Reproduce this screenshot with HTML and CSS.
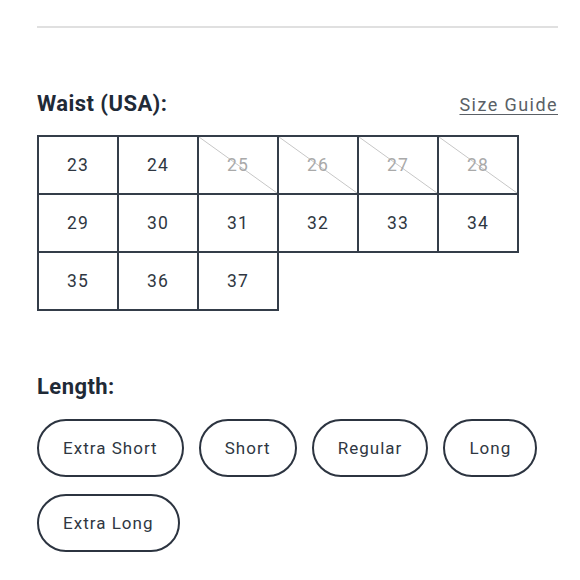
FILE: index.html
```html
<!DOCTYPE html>
<html>
<head>
<meta charset="utf-8">
<link rel="stylesheet" href="styles.css">
</head>
<body>
<div class="page">
  <div class="rule"></div>
  <div class="section-head">
    <h2 class="title">Waist (USA):</h2>
    <a class="guide" href="#">Size Guide</a>
  </div>
  <div class="sizes">
    <div class="cell">23</div>
    <div class="cell">24</div>
    <div class="cell off">25</div>
    <div class="cell off">26</div>
    <div class="cell off">27</div>
    <div class="cell off">28</div>
    <div class="cell">29</div>
    <div class="cell">30</div>
    <div class="cell">31</div>
    <div class="cell">32</div>
    <div class="cell">33</div>
    <div class="cell">34</div>
    <div class="cell">35</div>
    <div class="cell">36</div>
    <div class="cell">37</div>
  </div>
  <h2 class="title length-title">Length:</h2>
  <div class="pills">
    <div class="pill">Extra Short</div>
    <div class="pill">Short</div>
    <div class="pill">Regular</div>
    <div class="pill">Long</div>
    <div class="pill">Extra Long</div>
  </div>
</div>
</body>
</html>
```
FILE: styles.css
```css
html, body {
  margin: 0;
  padding: 0;
  background: #fff;
}
.page {
  padding: 26px 22px 0 37px;
  font-family: Roboto, "Liberation Sans", sans-serif;
  color: #2b3340;
}
.rule {
  height: 2px;
  background: #e0e0e0;
}
.section-head {
  display: flex;
  justify-content: space-between;
  align-items: baseline;
  margin-top: 63px;
}
.title {
  margin: 0;
  font-size: 22px;
  font-weight: 700;
  color: #1f2a37;
  letter-spacing: 0.02em;
  line-height: 26px;
}
.guide {
  font-size: 18px;
  color: #5a5f66;
  letter-spacing: 0.08em;
  text-decoration: underline;
  text-underline-offset: 3px;
  text-decoration-thickness: 1px;
}
.sizes {
  display: grid;
  grid-template-columns: repeat(6, 80px);
  grid-auto-rows: 58px;
  margin-top: 18px;
  padding-right: 2px;
  padding-bottom: 2px;
}
.cell {
  width: 82px;
  height: 60px;
  box-sizing: border-box;
  border: 2px solid #343d49;
  display: flex;
  align-items: center;
  justify-content: center;
  font-size: 17.5px;
  letter-spacing: 0.06em;
  color: #2f3742;
}
.cell.off {
  color: #a9a9a9;
  background: linear-gradient(to top right, transparent calc(50% - 0.8px), #c6c6c6 50%, transparent calc(50% + 0.8px));
}
.length-title {
  margin-top: 63px;
}
.pills {
  display: flex;
  flex-wrap: wrap;
  gap: 17px 15px;
  margin-top: 19px;
}
.pill {
  height: 58px;
  box-sizing: border-box;
  border: 2px solid #2c3440;
  border-radius: 29px;
  padding: 0 24px;
  display: flex;
  align-items: center;
  font-size: 17px;
  letter-spacing: 0.06em;
  color: #2f3742;
}
```
